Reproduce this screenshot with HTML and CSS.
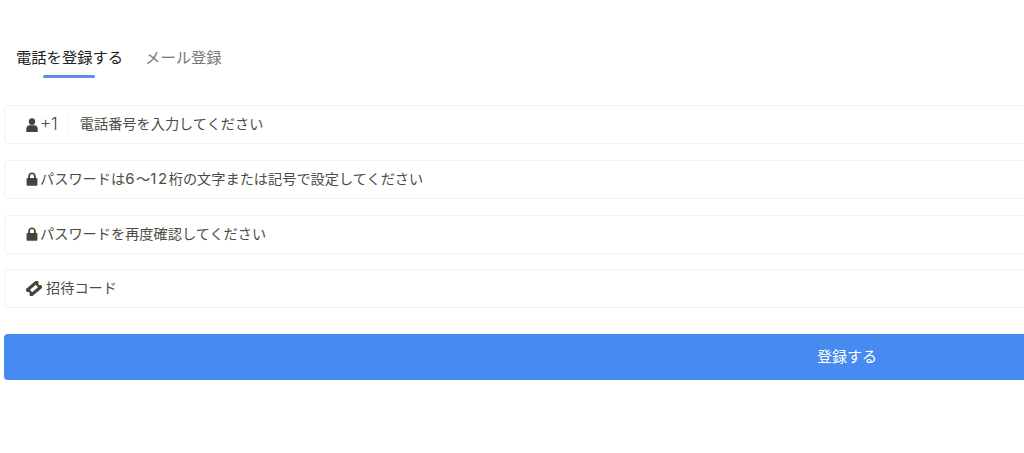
FILE: index.html
```html
<!doctype html>
<html lang="ja">
  <head>
    <meta charset="UTF-8" />
    <meta name="viewport" content="width=device-width, initial-scale=1.0" />
    <title>登録</title>
    <link rel="stylesheet" href="styles.css">
  </head>
  <body>
    <div class="page">
      <div class="tabs">
        <div class="tab active">電話を登録する</div>
        <div class="tab">メール登録</div>
      </div>

      <form class="form">
        <div class="field">
          <svg class="icon" viewBox="0 0 12 14"><ellipse cx="6" cy="3.6" rx="3.2" ry="3.4"/><path d="M0.3 14V10.8C0.3 8.8 1.8 7.3 3.7 7.3H8.3C10.2 7.3 11.7 8.8 11.7 10.8V14Z"/></svg>
          <span class="code">+1</span>
          <span class="divider"></span>
          <span class="hint">電話番号を入力してください</span>
        </div>
        <div class="field">
          <svg class="icon" viewBox="0 0 12 14"><path d="M2.2 7V4.3C2.2 2 3.9 .4 6 .4S9.8 2 9.8 4.3V7H8V4.3C8 3 7.2 2.1 6 2.1S4 3 4 4.3V7Z"/><rect x=".6" y="6" width="10.8" height="7.8" rx="1.2"/></svg>
          <span class="hint">パスワードは<span class="num">6</span>〜<span class="num">12</span>桁の文字または記号で設定してください</span>
        </div>
        <div class="field">
          <svg class="icon" viewBox="0 0 12 14"><path d="M2.2 7V4.3C2.2 2 3.9 .4 6 .4S9.8 2 9.8 4.3V7H8V4.3C8 3 7.2 2.1 6 2.1S4 3 4 4.3V7Z"/><rect x=".6" y="6" width="10.8" height="7.8" rx="1.2"/></svg>
          <span class="hint">パスワードを再度確認してください</span>
        </div>
        <div class="field">
          <svg class="icon ticket" viewBox="-8 -7.5 16 15"><path transform="rotate(-40)" fill-rule="evenodd" d="M-7.6 -4.8H7.6V-1.5A1.5 1.5 0 0 0 7.6 1.5V4.8H-7.6V1.5A1.5 1.5 0 0 0 -7.6 -1.5ZM-3.8 -1.7V1.7H3.8V-1.7Z"/></svg>
          <span class="hint">招待コード</span>
        </div>
        <button class="submit" type="button">登録する</button>
      </form>
    </div>
  </body>
</html>
```

FILE: styles.css
```css
html,
body {
  margin: 0;
  height: 100%;
  overflow: hidden;
  background: white;
}
body {
  font-family: "Noto Sans CJK JP", "Noto Sans", sans-serif;
}
.page {
  width: 1686px;
  margin-left: 4px;
  padding-top: 44px;
}
.tabs {
  display: flex;
  gap: 22px;
  padding-left: 12px;
}
.tab {
  position: relative;
  font-size: 15.3px;
  line-height: 24px;
  color: #777;
}
.tab.active {
  color: #222;
}
.tab.active::after {
  content: "";
  position: absolute;
  left: 27px;
  top: 31px;
  width: 52px;
  height: 3px;
  border-radius: 2px;
  background: #5b8def;
}
.form {
  display: flex;
  flex-direction: column;
  gap: 15.8px;
  margin-top: 37px;
}
.field {
  display: flex;
  align-items: center;
  height: 39px;
  box-sizing: border-box;
  padding-left: 21px;
  border: 1px solid #f2f2f2;
  border-radius: 4px;
  font-size: 14.2px;
  color: #4c4c44;
}
.hint {
  margin-top: -3px;
}
.num {
  font-family: Inter, sans-serif;
  font-size: 15px;
  letter-spacing: 1.6px;
}
.icon {
  width: 12px;
  height: 14px;
  margin-right: 2px;
  fill: #44443a;
  flex-shrink: 0;
}
.ticket {
  width: 16px;
  height: 15px;
  margin-right: 4px;
}
.code {
  margin-top: -1px;
  font-family: Inter, sans-serif;
  font-size: 17px;
  font-weight: 300;
}
.divider {
  width: 1px;
  height: 18px;
  margin: 0 11px 0 10px;
  background: #f4f4f4;
}
.submit {
  height: 46px;
  margin-top: 10px;
  padding-bottom: 4px;
  border: none;
  border-radius: 4px;
  background: #478af0;
  color: white;
  font-family: inherit;
  font-size: 15px;
}
```
